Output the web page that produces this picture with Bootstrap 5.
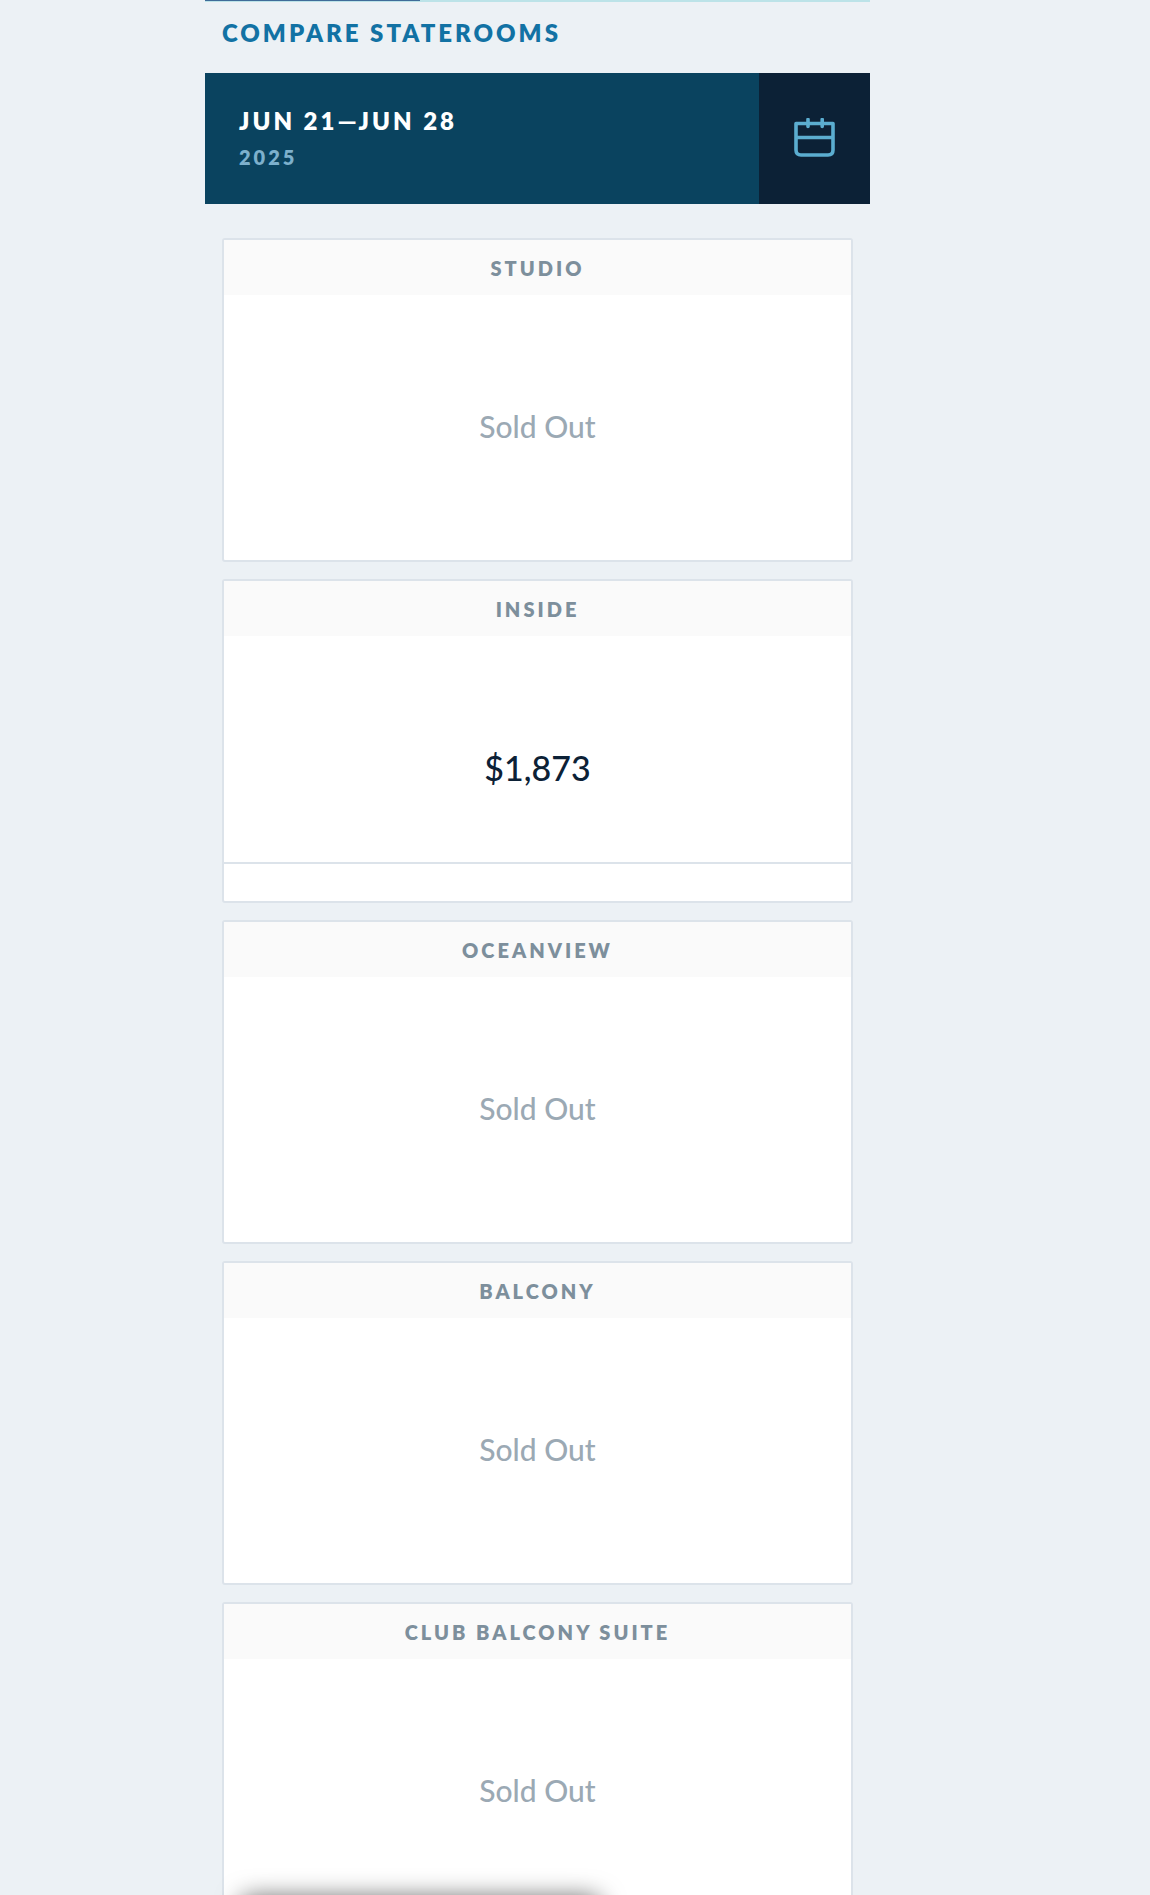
<!DOCTYPE html>
<html lang="en">
<head>
<meta charset="utf-8">
<meta name="viewport" content="width=device-width, initial-scale=1">
<title>Compare Staterooms</title>
<link href="https://cdn.jsdelivr.net/npm/bootstrap@5.3.0/dist/css/bootstrap.min.css" rel="stylesheet">
<style>
body { background: #ecf1f5; font-family: Lato, "Open Sans", sans-serif; color: #0c2136; }
.heavy { font-weight: 800; }
.page-col { padding-left: 205px; padding-right: 280px; }
.steps-line { height: 2px; background: #bce3e8; }
.steps-done { width: 215px; height: 1px; background: #3f6c98; }
.page-title { font-size: 24px; line-height: 28px; letter-spacing: 3px; color: #1272a4; padding: 17px 17px 26px; }
.date-bar { background: #0a435f; height: 131px; }
.date-text { padding: 0 34px; }
.date-range { font-size: 24px; line-height: 36px; letter-spacing: 3px; color: #fff; }
.date-year { font-size: 20px; line-height: 36px; letter-spacing: 3px; color: #7db0cc; }
.date-btn { width: 111px; background: #0c2136; color: #5badd0; }
.rooms { padding: 34px 17px; gap: 17px; }
.room { height: 324px; border: 2px solid #dce3ea; border-radius: 3px; }
.room-name { background: #fafafa; font-size: 20px; line-height: 53px; padding-top: 2px; letter-spacing: 3px; color: #7d8f9c; }
.sold-out { font-size: 30px; font-weight: 500; color: #9ba9b4; padding-bottom: 2px; }
.room-price { font-size: 34px; font-weight: 500; color: #0c2136; padding-top: 36px; }
.room-foot { height: 39px; border-top: 2px solid #dce3ea; }
.chat-panel { left: 240px; bottom: -62px; width: 361px; height: 60px; border-radius: 12px; background: #fff; box-shadow: 0 0 24px rgba(0, 0, 0, .6); }
</style>
<script src="https://cdn.jsdelivr.net/npm/bootstrap@5.3.0/dist/js/bootstrap.bundle.min.js"></script>
</head>
<body class="vh-100 overflow-hidden position-relative">
<main class="page-col">
  <div class="steps-line"><div class="steps-done"></div></div>
  <h1 class="page-title heavy text-uppercase mb-0">Compare Staterooms</h1>
  <div class="date-bar d-flex align-items-stretch">
    <div class="date-text heavy flex-grow-1 d-flex flex-column justify-content-center text-uppercase">
      <div class="date-range">Jun 21—Jun 28</div>
      <div class="date-year">2025</div>
    </div>
    <button type="button" class="date-btn btn border-0 rounded-0 p-0" aria-label="Choose dates">
      <svg width="42" height="42" viewBox="0 0 42 42" fill="none" stroke="currentColor" stroke-width="3.6" stroke-linecap="round" stroke-linejoin="round" aria-hidden="true">
        <path d="M2 5.500h37v26.500q0 5-5 5H7q-5 0-5-5zM2 19.500h37M14 1.500v7M28.200 1.500v7"/>
      </svg>
    </button>
  </div>
  <section class="rooms d-flex flex-column">
    <article class="room bg-white d-flex flex-column">
      <h2 class="room-name heavy text-uppercase text-center mb-0">Studio</h2>
      <div class="sold-out flex-grow-1 d-flex align-items-center justify-content-center">Sold Out</div>
    </article>
    <article class="room bg-white d-flex flex-column">
      <h2 class="room-name heavy text-uppercase text-center mb-0">Inside</h2>
      <div class="room-price flex-grow-1 d-flex align-items-center justify-content-center">$1,873</div>
      <div class="room-foot"></div>
    </article>
    <article class="room bg-white d-flex flex-column">
      <h2 class="room-name heavy text-uppercase text-center mb-0">Oceanview</h2>
      <div class="sold-out flex-grow-1 d-flex align-items-center justify-content-center">Sold Out</div>
    </article>
    <article class="room bg-white d-flex flex-column">
      <h2 class="room-name heavy text-uppercase text-center mb-0">Balcony</h2>
      <div class="sold-out flex-grow-1 d-flex align-items-center justify-content-center">Sold Out</div>
    </article>
    <article class="room bg-white d-flex flex-column">
      <h2 class="room-name heavy text-uppercase text-center mb-0">Club Balcony Suite</h2>
      <div class="sold-out flex-grow-1 d-flex align-items-center justify-content-center">Sold Out</div>
    </article>
  </section>
</main>
<div class="chat-panel position-absolute"></div>
</body>
</html>
